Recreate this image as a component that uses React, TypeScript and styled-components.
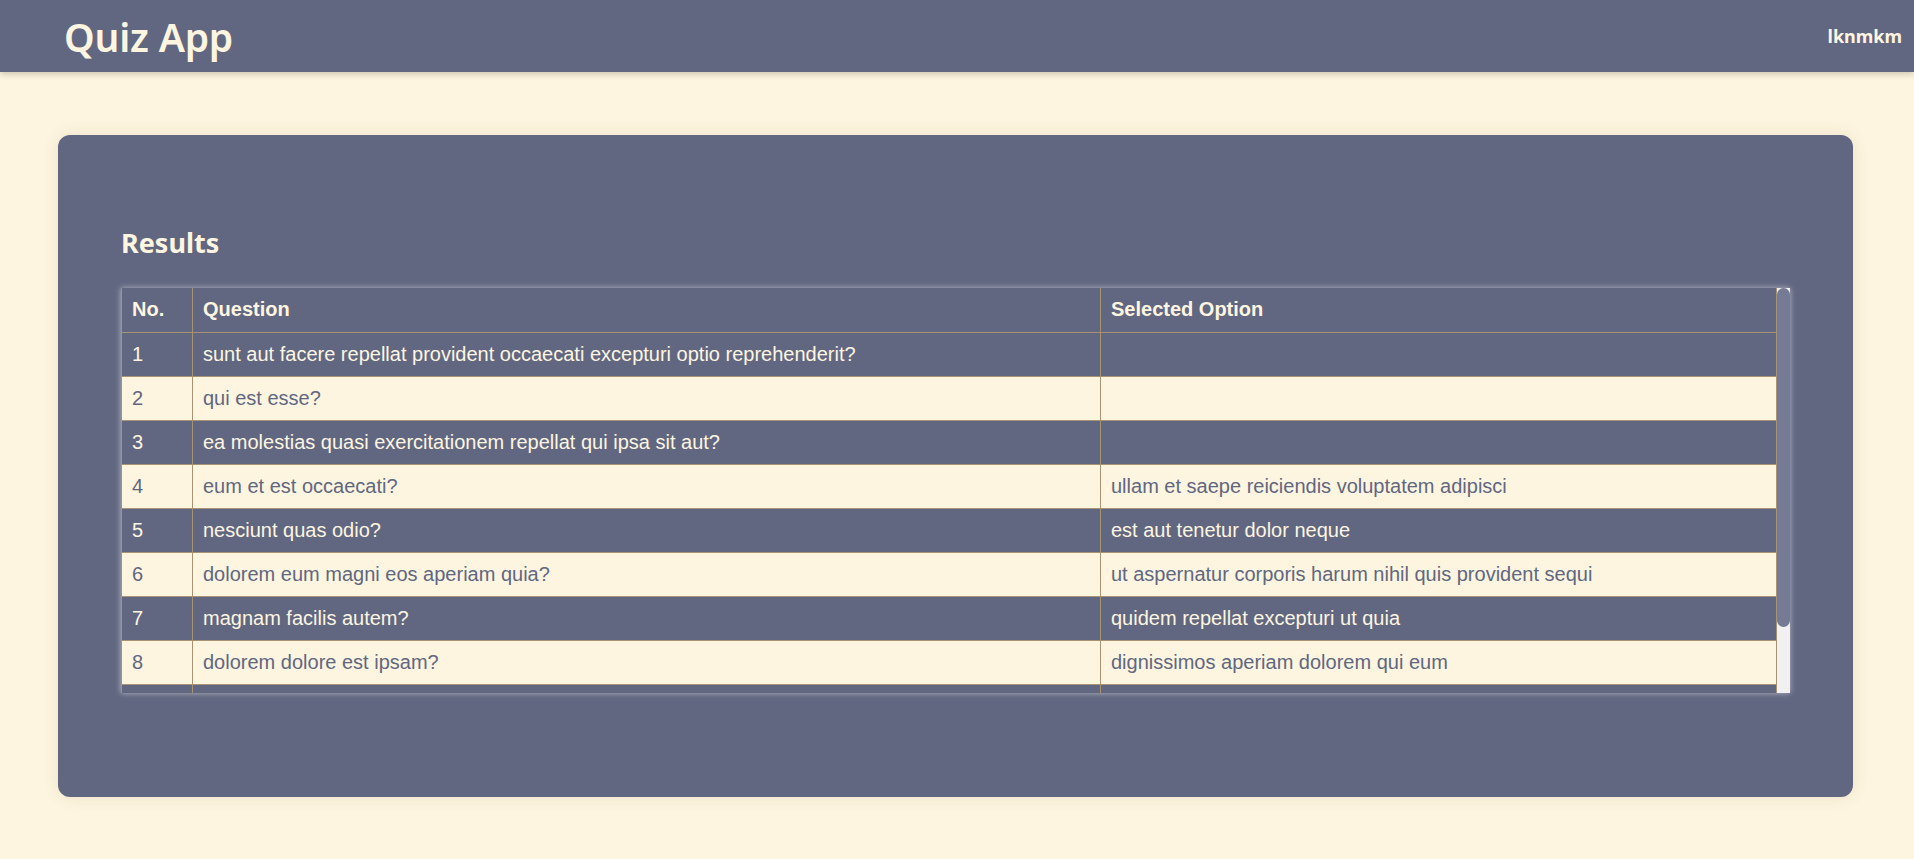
import React from "react";
import styled, { createGlobalStyle } from "styled-components";

const DARK = "#616780";
const CREAM = "#fdf5e0";
const LINE = "#a89274";

const Global = createGlobalStyle`
  html, body { margin: 0; padding: 0; }
  body {
    background: ${CREAM};
    font-family: "Noto Sans", "Open Sans", sans-serif;
    overflow: hidden;
  }
  * { box-sizing: border-box; }
`;

const Header = styled.header`
  height: 72px;
  background: ${DARK};
  color: ${CREAM};
  display: flex;
  align-items: center;
  justify-content: space-between;
  padding: 0 12px 0 64px;
  box-shadow: 0 2px 6px rgba(60, 50, 30, 0.25);
  position: relative;
  z-index: 1;
`;

const Brand = styled.h1`
  margin: 0;
  font-family: "Noto Sans", sans-serif;
  font-weight: 600;
  font-size: 39px;
  letter-spacing: -0.2px;
`;

const User = styled.span`
  font-family: "Noto Sans", sans-serif;
  font-weight: 700;
  font-size: 18px;
`;

const Main = styled.main`
  padding: 63px 61px 62px 58px;
`;

const Card = styled.section`
  background: ${DARK};
  border-radius: 12px;
  padding: 89px 63px 104px;
  box-shadow: 0 0 16px rgba(120, 90, 40, 0.12);
`;

const Title = styled.h2`
  margin: 0 0 27px;
  color: ${CREAM};
  font-family: "Noto Sans", sans-serif;
  font-weight: 700;
  font-size: 27px;
  line-height: 37px;
`;

const Frame = styled.div`
  height: 405px;
  display: flex;
  box-shadow: 0 0 6px rgba(255, 255, 255, 0.55);
`;

const Scroller = styled.div`
  flex: 1;
  min-width: 0;
  overflow-y: scroll;
  scrollbar-width: none;
  &::-webkit-scrollbar { display: none; }
`;

const Track = styled.div`
  width: 13px;
  flex: none;
  background: #f1f1f1;
`;

const Thumb = styled.div`
  height: 339px;
  background: #767b95;
  border-radius: 7px;
`;

const Table = styled.table`
  width: 100%;
  border-collapse: collapse;
  table-layout: fixed;
  font-family: "Liberation Sans", Arial, sans-serif;
  font-size: 20px;
`;

const Row = styled.tr<{ $light?: boolean }>`
  height: 44px;
  background: ${(p) => (p.$light ? CREAM : DARK)};
  color: ${(p) => (p.$light ? DARK : CREAM)};
`;

const Th = styled.th`
  text-align: left;
  font-weight: 700;
  padding: 0 10px;
  border: 1px solid ${LINE};
  border-top: none;
`;

const Td = styled.td`
  padding: 0 10px;
  border: 1px solid ${LINE};
  white-space: nowrap;
  overflow: hidden;
`;

const rows: [string, string][] = [
  ["sunt aut facere repellat provident occaecati excepturi optio reprehenderit?", ""],
  ["qui est esse?", ""],
  ["ea molestias quasi exercitationem repellat qui ipsa sit aut?", ""],
  ["eum et est occaecati?", "ullam et saepe reiciendis voluptatem adipisci"],
  ["nesciunt quas odio?", "est aut tenetur dolor neque"],
  ["dolorem eum magni eos aperiam quia?", "ut aspernatur corporis harum nihil quis provident sequi"],
  ["magnam facilis autem?", "quidem repellat excepturi ut quia"],
  ["dolorem dolore est ipsam?", "dignissimos aperiam dolorem qui eum"],
  ["nesciunt iure omnis dolorem tempora et accusantium?", "optio molestias id quia eum"],
  ["optio molestias id quia eum?", "et ea vero quia laudantium autem"],
];

export default function App() {
  return (
    <>
      <Global />
      <Header>
        <Brand>Quiz App</Brand>
        <User>lknmkm</User>
      </Header>
      <Main>
        <Card>
          <Title>Results</Title>
          <Frame>
            <Scroller>
              <Table>
                <colgroup>
                  <col style={{ width: 71 }} />
                  <col style={{ width: 908 }} />
                  <col />
                </colgroup>
                <thead>
                  <Row>
                    <Th>No.</Th>
                    <Th>Question</Th>
                    <Th>Selected Option</Th>
                  </Row>
                </thead>
                <tbody>
                  {rows.map(([q, o], i) => (
                    <Row key={i} $light={i % 2 === 1}>
                      <Td>{i + 1}</Td>
                      <Td>{q}</Td>
                      <Td>{o}</Td>
                    </Row>
                  ))}
                </tbody>
              </Table>
            </Scroller>
            <Track>
              <Thumb />
            </Track>
          </Frame>
        </Card>
      </Main>
    </>
  );
}
